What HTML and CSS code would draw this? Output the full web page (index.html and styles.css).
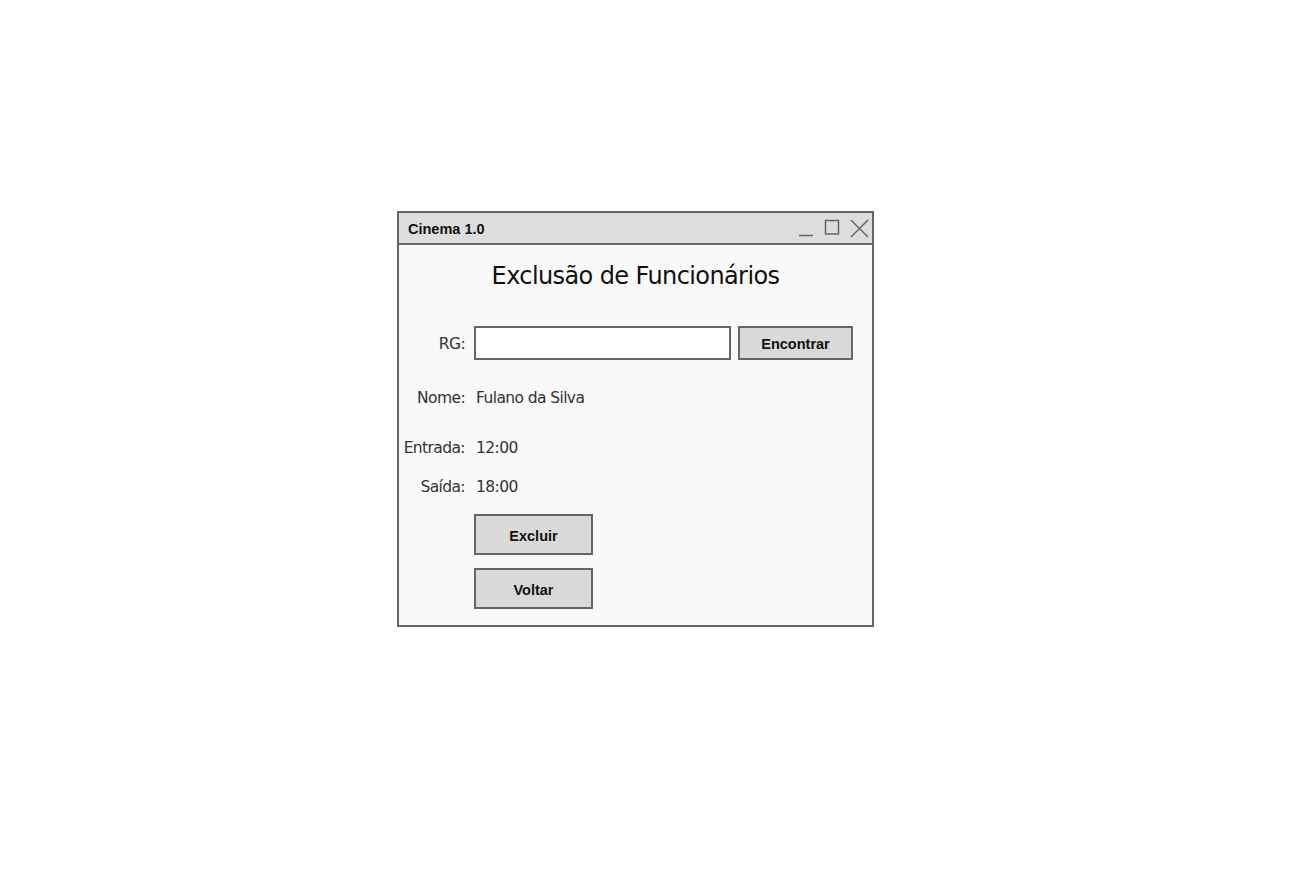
FILE: index.html
```html
<!DOCTYPE html>
<html lang="pt">
<head>
<meta charset="utf-8">
<title>Cinema 1.0</title>
<link rel="stylesheet" href="styles.css">
</head>
<body>
<div class="page">
  <div class="window">
    <div class="titlebar">
      <span class="title">Cinema 1.0</span>
      <div class="controls">
        <svg class="ctl" width="16" height="18" viewBox="0 0 16 18"><path d="M1 16.5H15" stroke="#666" stroke-width="1.5" fill="none"/></svg>
        <svg class="ctl" width="16" height="18" viewBox="0 0 16 18"><rect x="1.5" y="1.5" width="13" height="13.5" stroke="#666" stroke-width="1.5" fill="none"/></svg>
        <svg class="ctl" width="19" height="19" viewBox="0 0 19 19"><path d="M1 1L18 18M18 1L1 18" stroke="#666" stroke-width="1.5" fill="none"/></svg>
      </div>
    </div>
    <div class="content">
      <h1 class="heading">Exclusão de Funcionários</h1>
      <div class="row row-rg">
        <span class="label">RG:</span>
        <input class="field" type="text">
        <button class="btn btn-find">Encontrar</button>
      </div>
      <div class="row row-nome">
        <span class="label">Nome:</span>
        <span class="value">Fulano da Silva</span>
      </div>
      <div class="row row-entrada">
        <span class="label">Entrada:</span>
        <span class="value">12:00</span>
      </div>
      <div class="row row-saida">
        <span class="label">Saída:</span>
        <span class="value">18:00</span>
      </div>
      <div class="row row-excluir">
        <span class="label"></span>
        <button class="btn btn-action">Excluir</button>
      </div>
      <div class="row row-voltar">
        <span class="label"></span>
        <button class="btn btn-action">Voltar</button>
      </div>
    </div>
  </div>
</div>
</body>
</html>
```
FILE: styles.css
```css
html, body {
  margin: 0;
  padding: 0;
  background: #ffffff;
}
.page {
  padding-top: 211px;
  padding-left: 397px;
}
.window {
  width: 473px;
  border: 2px solid #666666;
  background: #f9f9f9;
  display: flex;
  flex-direction: column;
  font-family: "DejaVu Sans", "Noto Sans", sans-serif;
}
.titlebar {
  height: 30px;
  background: #dddddd;
  border-bottom: 2px solid #666666;
  display: flex;
  align-items: center;
  justify-content: space-between;
  padding: 0 3px 0 9px;
}
.title {
  font-family: "Liberation Sans", Arial, sans-serif;
  font-weight: bold;
  font-size: 14.5px;
  color: #111;
  padding-top: 2px;
}
.controls {
  display: flex;
  align-items: center;
  gap: 10px;
}
.ctl { display: block; }
.content {
  display: flex;
  flex-direction: column;
  padding: 16px 0 16px 0;
}
.heading {
  margin: 0;
  text-align: center;
  font-weight: normal;
  font-size: 24px;
  line-height: 30px;
  color: #111;
  letter-spacing: -0.6px;
}
.row {
  display: flex;
  align-items: center;
  font-size: 15.5px;
  color: #333;
  letter-spacing: -0.6px;
}
.label {
  width: 66px;
  flex: none;
  text-align: right;
  margin-right: 9px;
  padding-top: 2px;
}
.value {
  margin-left: 2px;
  padding-top: 2px;
}
.row-rg { margin-top: 35px; height: 34px; }
.row-nome { margin-top: 27px; height: 20px; }
.row-entrada { margin-top: 30px; height: 20px; }
.row-saida { margin-top: 19px; height: 20px; }
.row-excluir { margin-top: 18px; }
.row-voltar { margin-top: 13px; }
.field {
  box-sizing: border-box;
  width: 257px;
  height: 34px;
  border: 2px solid #666666;
  background: #ffffff;
  margin: 0 7px 0 0;
  padding: 0 4px;
}
.btn {
  box-sizing: border-box;
  border: 2px solid #666666;
  background: #d9d9d9;
  font-family: "Liberation Sans", Arial, sans-serif;
  font-weight: bold;
  font-size: 14.5px;
  color: #111;
  padding: 2px 0 0 0;
  margin: 0;
  letter-spacing: 0;
}
.btn-find {
  width: 115px;
  height: 34px;
}
.btn-action {
  width: 119px;
  height: 41px;
}
```
